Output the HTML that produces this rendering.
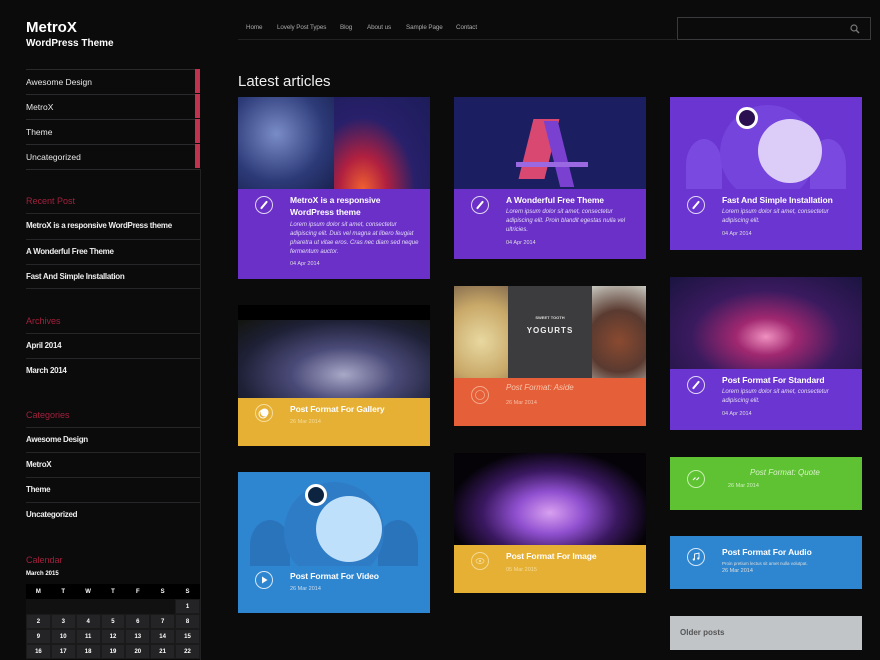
<!DOCTYPE html>
<html><head><meta charset="utf-8"><style>
*{margin:0;padding:0;box-sizing:border-box}
body{width:880px;height:660px;background:#0b0b0c;font-family:"Liberation Sans",sans-serif;color:#fff;position:relative;overflow:hidden}
.a{position:absolute}
.t1{font-weight:bold;font-size:15px;left:26px;top:19px}
.t2{font-weight:bold;font-size:10px;left:26px;top:38px}
.nav{top:24px;font-size:6.3px;color:#aaa;letter-spacing:-0.1px}
.mi{left:26px;width:170px;height:25px;border-top:1px solid #2a2a2c;font-size:8.5px;line-height:24px;color:#e8e8e8}
.rb{left:195px;width:5px;height:24px;background:#c0334f}
.h{left:26px;font-size:9px;color:#a3203c}
.si{left:26px;width:174px;height:25px;border-top:1px solid #262628;font-size:8px;font-weight:bold;line-height:24px;color:#eee;letter-spacing:-0.3px}
.card{position:absolute;overflow:hidden}
.ic{position:absolute;width:18px;height:18px;border:1px solid rgba(255,255,255,.8);border-radius:50%}
.pen:after{content:"";position:absolute;left:7px;top:3px;width:2px;height:10px;background:#fff;transform:rotate(40deg);border-radius:1px}
.ic svg{position:absolute;left:0;top:0}
.ti{position:absolute;font-weight:bold;font-size:8.5px;line-height:12px;color:#fff;letter-spacing:-0.1px}
.tx{position:absolute;font-style:italic;font-size:6px;line-height:9px;color:#e4dcf8}
.dt{position:absolute;font-size:5.5px;color:#ddd}
.cal{left:26px;width:174px;font-size:6px;font-weight:bold;text-align:center}
.cal div{float:left;width:24.85px;height:15px;line-height:15px;background:#242426;border:1px solid #1a1a1b}
</style></head><body>
<div class="a t1">MetroX</div>
<div class="a t2">WordPress Theme</div>

<div class="a nav" style="left:246px">Home</div>
<div class="a nav" style="left:277px">Lovely Post Types</div>
<div class="a nav" style="left:340px">Blog</div>
<div class="a nav" style="left:367px">About us</div>
<div class="a nav" style="left:406px">Sample Page</div>
<div class="a nav" style="left:456px">Contact</div>
<div class="a" style="left:238px;top:39px;width:438px;height:1px;background:#222"></div>
<div class="a" style="left:677px;top:17px;width:194px;height:23px;border:1px solid #3a3a3c"></div>
<svg class="a" style="left:850px;top:24px" width="10" height="10"><circle cx="4" cy="4" r="3" stroke="#777" fill="none" stroke-width="1.2"/><path d="M6 6 L9 9" stroke="#777" stroke-width="1.5"/></svg>

<div class="a mi" style="top:69px">Awesome Design</div>
<div class="a mi" style="top:94px">MetroX</div>
<div class="a mi" style="top:119px">Theme</div>
<div class="a mi" style="top:144px">Uncategorized</div>
<div class="a" style="left:26px;top:169px;width:174px;height:1px;background:#2a2a2c"></div>
<div class="a rb" style="top:69px"></div><div class="a rb" style="top:94px"></div><div class="a rb" style="top:119px"></div><div class="a rb" style="top:144px"></div>
<div class="a" style="left:200px;top:169px;width:1px;height:491px;background:#222"></div>

<div class="a h" style="top:196px">Recent Post</div>
<div class="a si" style="top:213px">MetroX is a responsive WordPress theme</div>
<div class="a si" style="top:239px">A Wonderful Free Theme</div>
<div class="a si" style="top:264px;border-bottom:1px solid #262628">Fast And Simple Installation</div>
<div class="a h" style="top:316px">Archives</div>
<div class="a si" style="top:333px">April 2014</div>
<div class="a si" style="top:358px">March 2014</div>
<div class="a h" style="top:410px">Categories</div>
<div class="a si" style="top:427px">Awesome Design</div>
<div class="a si" style="top:452px">MetroX</div>
<div class="a si" style="top:477px">Theme</div>
<div class="a si" style="top:502px">Uncategorized</div>
<div class="a h" style="top:555px">Calendar</div>
<div class="a" style="left:26px;top:571px;font-size:6px;font-weight:bold">March 2015</div>
<div class="a cal" style="top:584px">
<div style="background:#000;border-color:#000">M</div><div style="background:#000;border-color:#000">T</div><div style="background:#000;border-color:#000">W</div><div style="background:#000;border-color:#000">T</div><div style="background:#000;border-color:#000">F</div><div style="background:#000;border-color:#000">S</div><div style="background:#000;border-color:#000">S</div>
<div style="width:149.1px;background:#111;border-color:#111"></div><div>1</div>
<div>2</div><div>3</div><div>4</div><div>5</div><div>6</div><div>7</div><div>8</div>
<div>9</div><div>10</div><div>11</div><div>12</div><div>13</div><div>14</div><div>15</div>
<div>16</div><div>17</div><div>18</div><div>19</div><div>20</div><div>21</div><div>22</div>
</div>

<div class="a" style="left:238px;top:73px;font-size:15px;color:#eee">Latest articles</div>

<!-- col1 card1 -->
<div class="card" style="left:238px;top:97px;width:192px;height:182px;background:#6a30c8">
<div class="a" style="left:0;top:0;width:96px;height:92px;background:radial-gradient(circle at 40% 40%,#7a8cc8,#2c3a78 60%,#1a2250)"></div>
<div class="a" style="left:96px;top:0;width:96px;height:92px;background:radial-gradient(ellipse at 30% 100%,#f06030,#b02040 25%,#28206a 55%,#1c1c5a)"></div>
<div class="ic pen" style="left:17px;top:99px"></div>
<div class="ti" style="left:52px;top:97px;width:130px">MetroX is a responsive WordPress theme</div>
<div class="tx" style="left:52px;top:124px;width:130px">Lorem ipsum dolor sit amet, consectetur adipiscing elit. Duis vel magna at libero feugiat pharetra ut vitae eros. Cras nec diam sed neque fermentum auctor.</div>
<div class="dt" style="left:52px;top:164px">04 Apr 2014</div>
</div>
<!-- gallery -->
<div class="card" style="left:238px;top:305px;width:192px;height:141px;background:#e6b034">
<div class="a" style="left:0;top:0;width:192px;height:15px;background:#000"></div>
<div class="a" style="left:0;top:15px;width:192px;height:78px;background:radial-gradient(ellipse at 55% 70%,#a8a8c8,#4a4a78 35%,#1e2036 70%,#12140e)"></div>
<div class="ic" style="left:17px;top:99px;border-color:#f6dc9c"><svg width="16" height="16"><circle cx="8.5" cy="7.5" r="4" fill="#fff"/><circle cx="7" cy="9" r="4" fill="none" stroke="#fff" stroke-width="1"/></svg></div>
<div class="ti" style="left:52px;top:98px">Post Format For Gallery</div>
<div class="dt" style="left:52px;top:114px;color:#f4dc9a">26 Mar 2014</div>
</div>
<!-- video -->
<div class="card" style="left:238px;top:472px;width:192px;height:141px;background:#2f86d0">
<div class="a" style="left:12px;top:48px;width:40px;height:50px;border-radius:50% 50% 0 0;background:#2a74bc"></div>
<div class="a" style="left:140px;top:48px;width:40px;height:50px;border-radius:50% 50% 0 0;background:#2a74bc"></div>
<div class="a" style="left:46px;top:10px;width:100px;height:100px;border-radius:50%;background:#2e7cc6"></div>
<div class="a" style="left:78px;top:24px;width:66px;height:66px;border-radius:50%;background:#bfe0fa"></div>
<div class="a" style="left:67px;top:12px;width:22px;height:22px;border-radius:50%;background:#0c2440;border:3px solid #fff"></div>
<div class="a" style="left:0;top:94px;width:192px;height:47px;background:#2f86d0"></div>
<div class="ic" style="left:17px;top:99px"><svg width="16" height="16"><path d="M6 4.5 L11.5 8 L6 11.5Z" fill="#fff"/></svg></div>
<div class="ti" style="left:52px;top:98px">Post Format For Video</div>
<div class="dt" style="left:52px;top:114px;color:#cde">26 Mar 2014</div>
</div>

<!-- col2 -->
<div class="card" style="left:454px;top:97px;width:192px;height:162px;background:#6a30c8">
<div class="a" style="left:0;top:0;width:192px;height:92px;background:#1c1e62"></div>
<div class="a" style="left:72px;top:22px;width:26px;height:60px;background:#d84870;transform:skewX(-14deg)"></div>
<div class="a" style="left:98px;top:24px;width:14px;height:66px;background:#7a40d0;transform:skewX(14deg)"></div>
<div class="a" style="left:62px;top:65px;width:72px;height:5px;background:#9a68e0"></div>
<div class="ic pen" style="left:17px;top:99px"></div>
<div class="ti" style="left:52px;top:97px">A Wonderful Free Theme</div>
<div class="tx" style="left:52px;top:111px;width:130px">Lorem ipsum dolor sit amet, consectetur adipiscing elit. Proin blandit egestas nulla vel ultricies.</div>
<div class="dt" style="left:52px;top:143px">04 Apr 2014</div>
</div>
<div class="card" style="left:454px;top:286px;width:192px;height:140px;background:#e55f38">
<div class="a" style="left:0;top:0;width:54px;height:92px;background:radial-gradient(circle at 50% 60%,#e8d8a0,#c8a868 60%,#8a7050)"></div>
<div class="a" style="left:54px;top:0;width:84px;height:92px;background:#3c3c3e"></div>
<div class="a" style="left:138px;top:0;width:54px;height:92px;background:radial-gradient(circle at 50% 60%,#8a4a30,#5a3a30 50%,#c8c8c0)"></div>
<div class="a" style="left:54px;top:40px;width:84px;font-size:8px;font-weight:bold;text-align:center;color:#eee;letter-spacing:1px">YOGURTS</div>
<div class="a" style="left:54px;top:29px;width:84px;font-size:4px;font-weight:bold;text-align:center;color:#ddd">SWEET TOOTH</div>
<div class="ic" style="left:17px;top:100px;border-color:#f4a888"><svg width="16" height="16"><circle cx="8" cy="8" r="4.5" fill="none" stroke="#f4a888" stroke-width="0.8"/></svg></div>
<div class="a" style="left:52px;top:97px;font-size:8px;font-style:italic;color:#f8c8b0">Post Format: Aside</div>
<div class="dt" style="left:52px;top:114px;color:#f6c0a8">26 Mar 2014</div>
</div>
<div class="card" style="left:454px;top:453px;width:192px;height:140px;background:#e6b034">
<div class="a" style="left:0;top:0;width:192px;height:92px;background:radial-gradient(ellipse at 50% 65%,#d8a0f0,#9050d0 25%,#3a1860 50%,#050308 75%)"></div>
<div class="ic" style="left:17px;top:99px;border-color:#f4d890"><svg width="16" height="16"><ellipse cx="8" cy="8" rx="4" ry="2.5" fill="none" stroke="#f4d890" stroke-width="0.9"/><circle cx="8" cy="8" r="1.2" fill="#f4d890"/></svg></div>
<div class="ti" style="left:52px;top:97px">Post Format For Image</div>
<div class="dt" style="left:52px;top:114px;color:#f4dc9a">05 Mar 2015</div>
</div>

<!-- col3 -->
<div class="card" style="left:670px;top:97px;width:192px;height:153px;background:#6a35d0">
<div class="a" style="left:16px;top:42px;width:36px;height:52px;border-radius:50% 50% 0 0;background:#7a4ae0"></div>
<div class="a" style="left:140px;top:42px;width:36px;height:52px;border-radius:50% 50% 0 0;background:#7a4ae0"></div>
<div class="a" style="left:50px;top:8px;width:96px;height:96px;border-radius:50%;background:#7444dc"></div>
<div class="a" style="left:88px;top:22px;width:64px;height:64px;border-radius:50%;background:#dccdf8"></div>
<div class="a" style="left:66px;top:10px;width:22px;height:22px;border-radius:50%;background:#2a1050;border:3px solid #fff"></div>
<div class="a" style="left:0;top:92px;width:192px;height:61px;background:#6a35d0"></div>
<div class="ic pen" style="left:17px;top:99px"></div>
<div class="ti" style="left:52px;top:97px">Fast And Simple Installation</div>
<div class="tx" style="left:52px;top:111px;width:130px">Lorem ipsum dolor sit amet, consectetur adipiscing elit.</div>
<div class="dt" style="left:52px;top:134px">04 Apr 2014</div>
</div>
<div class="card" style="left:670px;top:277px;width:192px;height:153px;background:#6a35d0">
<div class="a" style="left:0;top:0;width:192px;height:92px;background:radial-gradient(ellipse at 50% 65%,#f090c0,#a02870 22%,#3a1a5e 55%,#1a1440)"></div>
<div class="ic pen" style="left:17px;top:99px"></div>
<div class="ti" style="left:52px;top:97px">Post Format For Standard</div>
<div class="tx" style="left:52px;top:111px;width:130px">Lorem ipsum dolor sit amet, consectetur adipiscing elit.</div>
<div class="dt" style="left:52px;top:134px">04 Apr 2014</div>
</div>
<div class="card" style="left:670px;top:457px;width:192px;height:53px;background:#5ec232">
<div class="ic" style="left:17px;top:13px;border-color:#c8f0b0"><svg width="16" height="16"><path d="M5 9 L7.5 6.5 M8.5 9 L11 6.5" stroke="#fff" stroke-width="1.2"/></svg></div>
<div class="a" style="left:80px;top:11px;font-size:8px;font-style:italic;color:#d8f4c8">Post Format: Quote</div>
<div class="dt" style="left:58px;top:26px;color:#d0f0c0">26 Mar 2014</div>
</div>
<div class="card" style="left:670px;top:536px;width:192px;height:53px;background:#2f86d0">
<div class="ic" style="left:17px;top:12px"><svg width="16" height="16"><path d="M6.5 10.5 V5 L11 4 V9.5" fill="none" stroke="#fff" stroke-width="0.9"/><circle cx="5.8" cy="10.5" r="1.1" fill="#fff"/><circle cx="10.3" cy="9.5" r="1.1" fill="#fff"/></svg></div>
<div class="ti" style="left:52px;top:10px">Post Format For Audio</div>
<div class="dt" style="left:52px;top:25px;font-size:4.5px">Proin pretium lectus sit amet nulla volutpat.</div>
<div class="dt" style="left:52px;top:32px">26 Mar 2014</div>
</div>
<div class="card" style="left:670px;top:616px;width:192px;height:34px;background:#c2c5c8">
<div class="a" style="left:10px;top:12px;font-size:8px;font-weight:bold;color:#555">Older posts</div>
</div>
</body></html>
